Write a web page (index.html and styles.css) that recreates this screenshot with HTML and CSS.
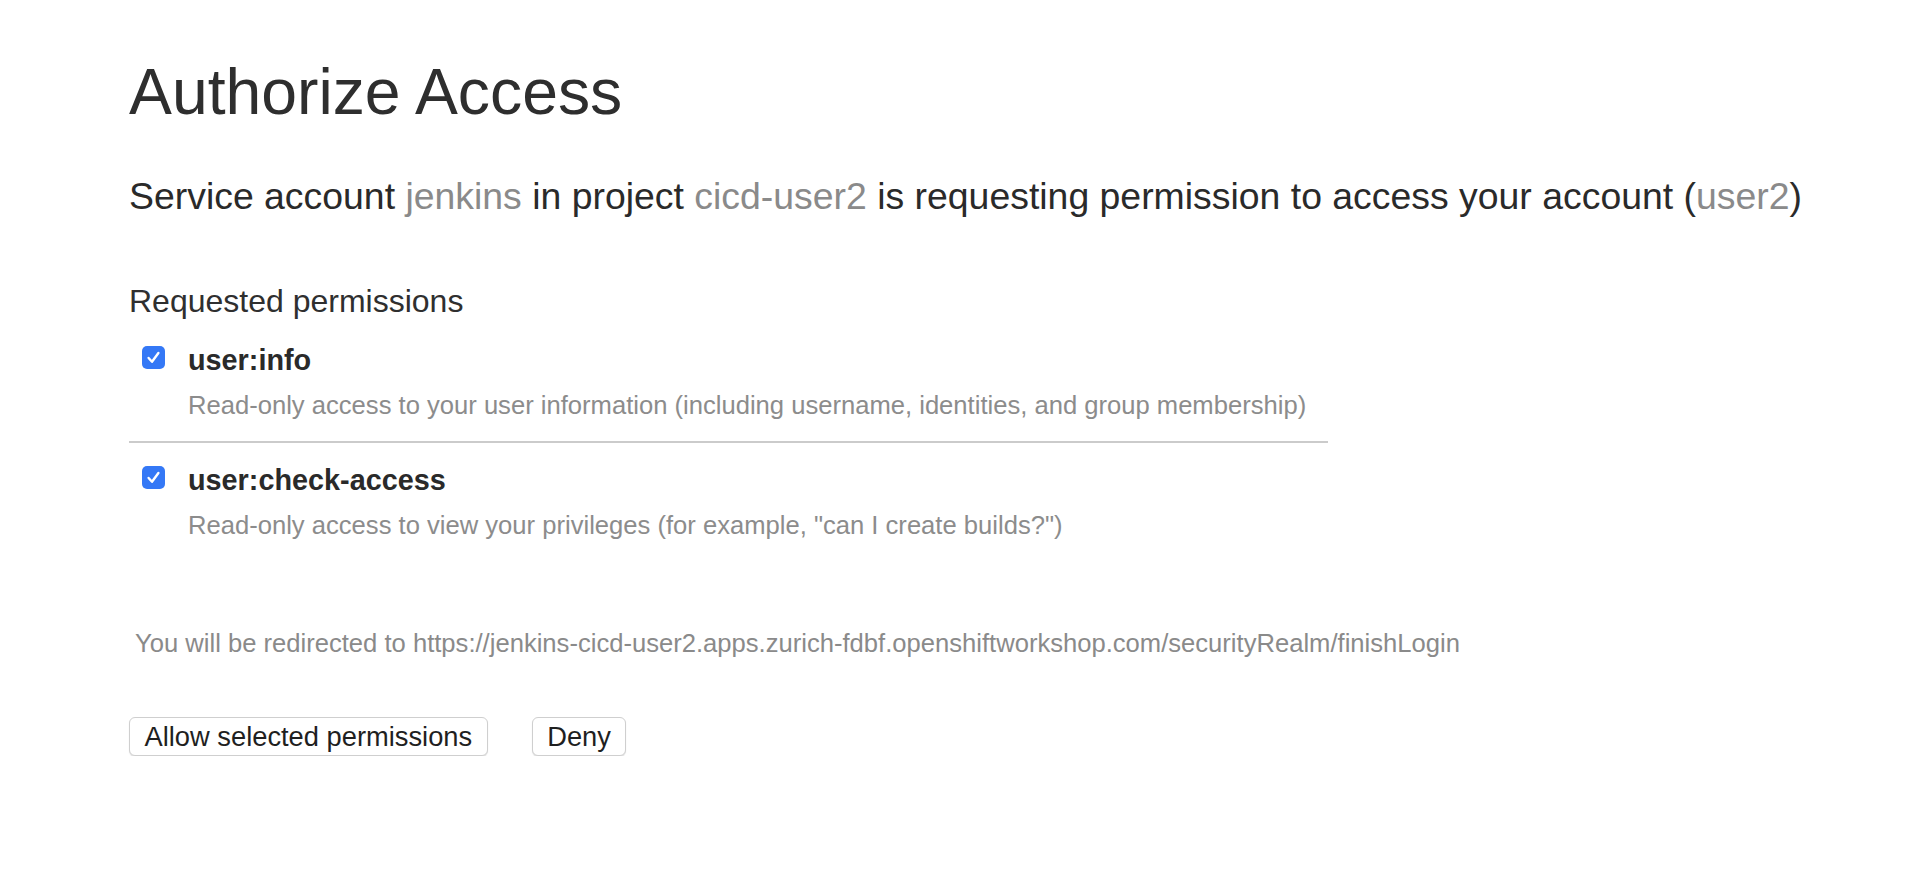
FILE: index.html
```html
<!DOCTYPE html>
<html lang="en">
<head>
<meta charset="utf-8">
<title>Authorize Access</title>
<link rel="stylesheet" href="styles.css">
</head>
<body>
<main class="page">
  <h1 class="title">Authorize Access</h1>
  <p class="lead">Service account <span class="muted">jenkins</span> in project <span class="muted">cicd-user2</span> is requesting permission to access your account (<span class="muted">user2</span>)</p>

  <section class="perms">
    <h2 class="perms-title">Requested permissions</h2>
    <div class="perm">
      <span class="check"><svg viewBox="0 0 23 23" width="23" height="23"><rect width="23" height="23" rx="5" fill="#3478f6"/><path d="M6.6 12 L10 15.8 L16.4 7" fill="none" stroke="#fff" stroke-width="2.4" stroke-linecap="round" stroke-linejoin="round"/></svg></span>
      <div class="perm-body">
        <div class="perm-name">user:info</div>
        <div class="perm-desc">Read-only access to your user information (including username, identities, and group membership)</div>
      </div>
    </div>
    <hr class="sep">
    <div class="perm">
      <span class="check"><svg viewBox="0 0 23 23" width="23" height="23"><rect width="23" height="23" rx="5" fill="#3478f6"/><path d="M6.6 12 L10 15.8 L16.4 7" fill="none" stroke="#fff" stroke-width="2.4" stroke-linecap="round" stroke-linejoin="round"/></svg></span>
      <div class="perm-body">
        <div class="perm-name">user:check-access</div>
        <div class="perm-desc">Read-only access to view your privileges (for example, "can I create builds?")</div>
      </div>
    </div>
  </section>

  <p class="redirect">You will be redirected to https://jenkins-cicd-user2.apps.zurich-fdbf.openshiftworkshop.com/securityRealm/finishLogin</p>

  <div class="actions">
    <button class="btn" type="button">Allow selected permissions</button>
    <button class="btn" type="button">Deny</button>
  </div>
</main>
</body>
</html>
```
FILE: styles.css
```css
html, body {
  margin: 0;
  padding: 0;
  background: #ffffff;
}

body {
  font-family: "Liberation Sans", Arial, Helvetica, sans-serif;
  color: #2f2f2f;
}

.page {
  padding: 54px 0 0 129px;
}

.title {
  margin: 0;
  font-size: 64.3px;
  line-height: 76px;
  font-weight: 400;
  color: #2e2e2e;
}

.lead {
  margin: 44px 0 0;
  font-size: 37.4px;
  line-height: 44px;
  color: #2a2a2a;
}

.muted {
  color: #8a8a8a;
}

.perms {
  width: 1199px;
  margin-top: 64px;
}

.perms-title {
  margin: 0;
  font-size: 32px;
  line-height: 38px;
  font-weight: 400;
  color: #2f2f2f;
}

.perm {
  display: flex;
  align-items: flex-start;
  gap: 23px;
  padding-left: 13px;
  margin-top: 23px;
}

.sep + .perm {
  margin-top: 20px;
}

.check {
  display: block;
  width: 23px;
  height: 23px;
  margin-top: 3px;
  flex: none;
}

.check svg {
  display: block;
}

.perm-name {
  font-size: 28.8px;
  line-height: 34px;
  font-weight: 700;
  color: #2a2a2a;
}

.perm-desc {
  margin-top: 13px;
  font-size: 25.6px;
  line-height: 30px;
  color: #8c8c8c;
}

.sep {
  margin: 21px 0 0;
  border: 0;
  height: 2px;
  background: #cbcbcb;
}

.redirect {
  margin: 88px 0 0 6px;
  font-size: 25.6px;
  line-height: 30px;
  color: #8a8a8a;
}

.actions {
  display: flex;
  gap: 44px;
  margin-top: 59px;
}

.btn {
  font-family: "Liberation Sans", Arial, Helvetica, sans-serif;
  font-size: 27.3px;
  line-height: 37px;
  height: 39px;
  padding: 0 14.5px;
  color: #1f1f1f;
  background: #ffffff;
  border: 1px solid #cfcfcf;
  border-radius: 6px;
  box-shadow: 0 1px 1px rgba(0, 0, 0, 0.12);
}
```
